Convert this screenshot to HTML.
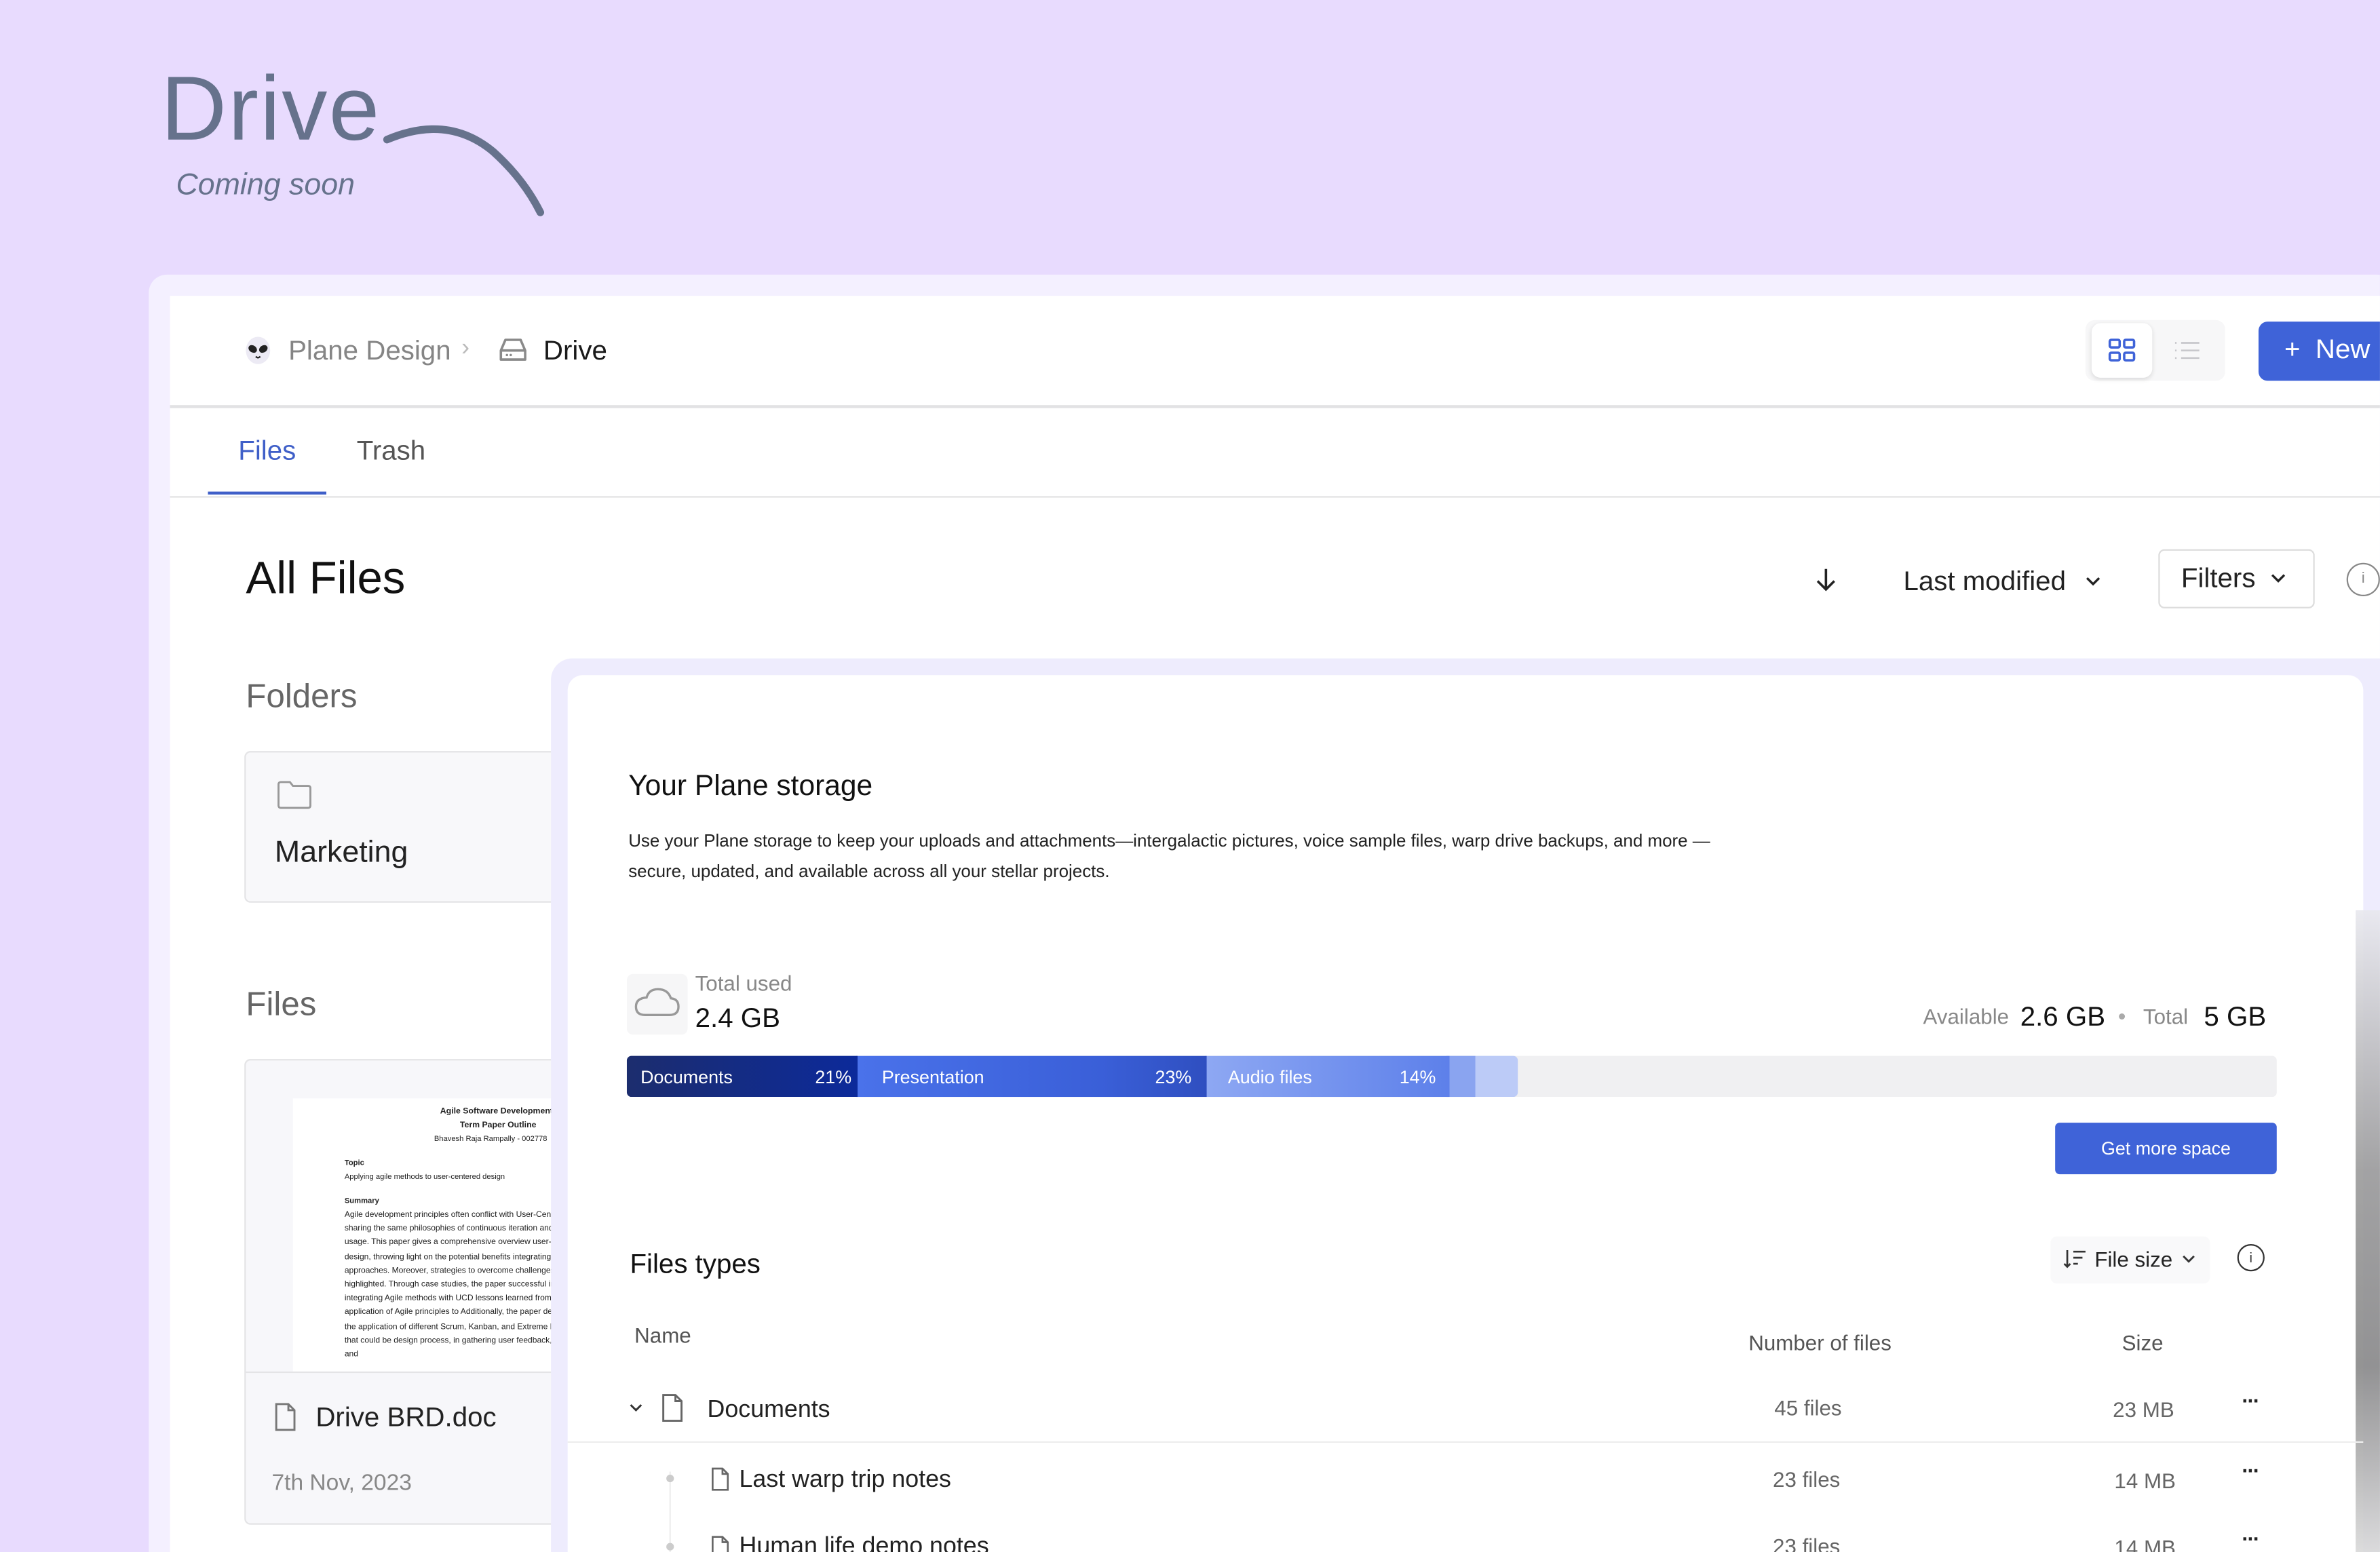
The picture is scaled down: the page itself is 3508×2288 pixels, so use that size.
<!DOCTYPE html>
<html><head><meta charset="utf-8">
<style>
html,body{margin:0;padding:0;width:3508px;height:2288px;overflow:hidden;background:#e8dbfe;}
#s{position:absolute;left:0;top:0;width:1568px;height:1023px;overflow:hidden;transform:scale(2.2372,2.2366);transform-origin:0 0;font-family:"Liberation Sans",sans-serif;color:#1a1a1a;}
.a{position:absolute;white-space:nowrap;}
.doc{font-size:5px;line-height:9.2px;color:#222}
</style></head><body><div id="s">

<svg class="a" style="left:100px;top:30px" width="270" height="120" viewBox="0 0 270 120">
<text x="6" y="62" font-family="Liberation Sans" font-size="60" fill="#66728c" letter-spacing="1">Drive</text>
<text x="16" y="98" font-family="Liberation Sans" font-size="20" font-style="italic" fill="#66728c">Coming soon</text>
<path d="M155 62 Q195 45 225 70 Q245 88 256 110" fill="none" stroke="#66728c" stroke-width="5" stroke-linecap="round"/>
</svg>

<div class="a" style="left:98px;top:181px;width:1480px;height:860px;background:#f4f0ff;border-radius:12px"></div>
<div class="a" style="left:112px;top:195px;width:1470px;height:850px;background:#fff"></div>

<svg class="a" style="left:160px;top:221px" width="20" height="20" viewBox="0 0 20 20"><ellipse cx="10" cy="10" rx="8" ry="9" fill="#eceaf4"/><ellipse cx="6.5" cy="9" rx="3" ry="2.3" transform="rotate(35 6.5 9)" fill="#222"/><ellipse cx="13.5" cy="9" rx="3" ry="2.3" transform="rotate(-35 13.5 9)" fill="#222"/><path d="M8.5 14 Q10 15.5 11.5 14" stroke="#222" fill="none"/></svg>
<div class="a" style="left:190px;top:221px;font-size:18px;color:#858585">Plane Design</div>
<div class="a" style="left:304px;top:221px;font-size:16px;color:#bbb">›</div>
<svg class="a" style="left:328px;top:222px" width="20" height="18" viewBox="0 0 20 18"><path d="M2 9 L5 2 H15 L18 9 V15 H2 Z M2 9 H18" fill="none" stroke="#8a8a8a" stroke-width="1.6" stroke-linejoin="round"/><circle cx="6" cy="12" r=".8" fill="#8a8a8a"/><circle cx="8.5" cy="12" r=".8" fill="#8a8a8a"/></svg>
<div class="a" style="left:358px;top:221px;font-size:18px;color:#1a1a1a">Drive</div>

<div class="a" style="left:1374px;top:211px;width:92px;height:40px;background:#f7f7f8;border-radius:6px"></div>
<div class="a" style="left:1378px;top:213px;width:40px;height:36px;background:#fff;border-radius:6px;box-shadow:0 1px 3px rgba(0,0,0,.12)"></div>
<svg class="a" style="left:1389px;top:223px" width="18" height="16" viewBox="0 0 18 16"><g fill="none" stroke="#3f63d8" stroke-width="1.6"><rect x="1" y="1" width="6.5" height="5" rx="1"/><rect x="10.5" y="1" width="6.5" height="5" rx="1"/><rect x="1" y="9.5" width="6.5" height="5" rx="1"/><rect x="10.5" y="9.5" width="6.5" height="5" rx="1"/></g></svg>
<svg class="a" style="left:1432px;top:224px" width="18" height="14" viewBox="0 0 18 14"><g stroke="#c8c8cc" stroke-width="1.2"><path d="M1 2h1M5 2h12M1 7h1M5 7h12M1 12h1M5 12h12"/></g></svg>
<div class="a" style="left:1488px;top:212px;width:100px;height:39px;background:#3f63d8;border-radius:6px"></div>
<div class="a" style="left:1505px;top:220px;font-size:18px;color:#fff">+&nbsp;&nbsp;New</div>

<div class="a" style="left:112px;top:267px;width:1460px;height:1.5px;background:#e2e2e4"></div>
<div class="a" style="left:157px;top:287px;font-size:18px;color:#3f5fc8">Files</div>
<div class="a" style="left:235px;top:287px;font-size:18px;color:#555">Trash</div>
<div class="a" style="left:137px;top:324px;width:78px;height:2px;background:#3f5fc8"></div>
<div class="a" style="left:112px;top:326.5px;width:1460px;height:1.5px;background:#e2e2e4"></div>

<div class="a" style="left:162px;top:365px;font-size:30px;color:#111">All Files</div>
<svg class="a" style="left:1194px;top:373px" width="18" height="18" viewBox="0 0 18 18"><path d="M9 2 V15 M3.5 10 L9 15.5 L14.5 10" fill="none" stroke="#222" stroke-width="1.6"/></svg>
<div class="a" style="left:1254px;top:373px;font-size:18px;color:#222">Last modified</div>
<svg class="a" style="left:1373px;top:378px" width="12" height="10" viewBox="0 0 12 10"><path d="M2 3 L6 7 L10 3" fill="none" stroke="#222" stroke-width="1.5"/></svg>
<div class="a" style="left:1422px;top:362px;width:101px;height:37px;border:1.5px solid #ddd;border-radius:4px"></div>
<div class="a" style="left:1437px;top:371px;font-size:18px;color:#222">Filters</div>
<svg class="a" style="left:1495px;top:376px" width="12" height="10" viewBox="0 0 12 10"><path d="M2 3 L6 7 L10 3" fill="none" stroke="#222" stroke-width="1.5"/></svg>
<div class="a" style="left:1546px;top:371px;width:20px;height:20px;border:1.2px solid #888;border-radius:50%;font-size:10px;color:#888;text-align:center;line-height:20px">i</div>

<div class="a" style="left:162px;top:446px;font-size:22px;color:#666">Folders</div>
<div class="a" style="left:161px;top:495px;width:220px;height:98px;border:1px solid #e4e4e6;border-radius:4px;background:#f8f8fa"></div>
<svg class="a" style="left:182px;top:514px" width="24" height="20" viewBox="0 0 24 20"><path d="M1.5 3 Q1.5 1.5 3 1.5 H9 L11 4 H21 Q22.5 4 22.5 5.5 V17 Q22.5 18.5 21 18.5 H3 Q1.5 18.5 1.5 17 Z" fill="none" stroke="#999" stroke-width="1.3"/></svg>
<div class="a" style="left:181px;top:551px;font-size:20px;color:#222">Marketing</div>

<div class="a" style="left:162px;top:649px;font-size:22px;color:#666">Files</div>
<div class="a" style="left:161px;top:698px;width:220px;height:305px;border:1px solid #e4e4e6;border-radius:4px;background:#f7f7fa"></div>
<div class="a" style="left:193px;top:724px;width:180px;height:180px;background:#fff;overflow:hidden">
 <div class="doc a" style="left:97px;top:5px;font-weight:bold;font-size:5.5px">Agile Software Development</div>
 <div class="doc a" style="left:110px;top:14px;font-weight:bold;font-size:5.5px">Term Paper Outline</div>
 <div class="doc a" style="left:93px;top:23px">Bhavesh Raja Rampally - 002778</div>
 <div class="doc a" style="left:34px;top:39px;font-weight:bold">Topic</div>
 <div class="doc a" style="left:34px;top:48px">Applying agile methods to user-centered design</div>
 <div class="doc a" style="left:34px;top:64px;font-weight:bold">Summary</div>
 <div class="doc a" style="left:34px;top:73px;white-space:normal;width:170px;font-size:5.4px">Agile development principles often conflict with User-Centered both sharing the same philosophies of continuous iteration and real-world usage. This paper gives a comprehensive overview user-centered design, throwing light on the potential benefits integrating the two approaches. Moreover, strategies to overcome challenges are highlighted. Through case studies, the paper successful instances of integrating Agile methods with UCD lessons learned from the application of Agile principles to Additionally, the paper demonstrates the application of different Scrum, Kanban, and Extreme Programming that could be design process, in gathering user feedback, wireframing, and</div>
</div>
<div class="a" style="left:162px;top:904px;width:219px;height:1px;background:#e4e4e6"></div>
<svg class="a" style="left:180px;top:924px" width="16" height="20" viewBox="0 0 16 20"><path d="M2 1.5 H10 L14 5.5 V18.5 H2 Z M10 1.5 V5.5 H14" fill="none" stroke="#777" stroke-width="1.3"/></svg>
<div class="a" style="left:208px;top:924px;font-size:18px;color:#222">Drive BRD.doc</div>
<div class="a" style="left:179px;top:969px;font-size:15px;color:#888">7th Nov, 2023</div>

<div class="a" style="left:363px;top:434px;width:1220px;height:620px;background:#eeecfd;border-radius:14px"></div>
<div class="a" style="left:374px;top:445px;width:1183px;height:600px;background:#fff;border-radius:10px"></div>
<div class="a" style="left:1552px;top:600px;width:18px;height:430px;background:linear-gradient(180deg,#e8e8ee,#9a9a9a 40%,#888 70%,#ddd);opacity:.9"></div>

<div class="a" style="left:414px;top:508px;font-size:19px;color:#111">Your Plane storage</div>
<div class="a" style="left:414px;top:545px;font-size:11.6px;line-height:20px;color:#222">Use your Plane storage to keep your uploads and attachments—intergalactic pictures, voice sample files, warp drive backups, and more —<br>secure, updated, and available across all your stellar projects.</div>

<div class="a" style="left:413px;top:642px;width:40px;height:40px;background:#f6f6f7;border-radius:4px"></div>
<svg class="a" style="left:417px;top:649px" width="32" height="24" viewBox="0 0 32 24"><path d="M8 20 H24 Q30 20 30 14.5 Q30 9.5 25 9 Q23 3 16.5 3 Q10.5 3 9 8.5 Q2 9 2 14.5 Q2 20 8 20 Z" fill="none" stroke="#999" stroke-width="1.5"/></svg>
<div class="a" style="left:458px;top:640px;font-size:14px;color:#888">Total used</div>
<div class="a" style="left:458px;top:661px;font-size:18px;color:#111">2.4 GB</div>
<div class="a" style="left:1267px;top:662px;font-size:14px;color:#888">Available</div>
<div class="a" style="left:1331px;top:660px;font-size:18px;color:#111">2.6 GB</div>
<div class="a" style="left:1396px;top:668px;width:4px;height:4px;border-radius:50%;background:#aaa"></div>
<div class="a" style="left:1412px;top:662px;font-size:14px;color:#888">Total</div>
<div class="a" style="left:1452px;top:660px;font-size:18px;color:#111">5 GB</div>

<div class="a" style="left:413px;top:696px;width:1087px;height:27px;background:#f0f0f2;border-radius:3px"></div>
<div class="a" style="left:953px;top:696px;width:47px;height:27px;background:#bccbf7;border-radius:0 3px 3px 0"></div>
<div class="a" style="left:953px;top:696px;width:19px;height:27px;background:#8aa4f0"></div>
<div class="a" style="left:794px;top:696px;width:161px;height:27px;background:linear-gradient(90deg,#8ea8f3,#5d80ea);"></div>
<div class="a" style="left:564px;top:696px;width:231px;height:27px;background:linear-gradient(90deg,#4a72ea,#3a5fd8 70%,#2f4fc0);"></div>
<div class="a" style="left:413px;top:696px;width:152px;height:27px;background:linear-gradient(90deg,#1c2d6e,#0c2a9a);border-radius:3px 0 0 3px"></div>
<div class="a" style="left:422px;top:703px;font-size:12px;color:#fff">Documents</div>
<div class="a" style="left:537px;top:703px;font-size:12px;color:#fff">21%</div>
<div class="a" style="left:581px;top:703px;font-size:12px;color:#fff">Presentation</div>
<div class="a" style="left:761px;top:703px;font-size:12px;color:#fff">23%</div>
<div class="a" style="left:809px;top:703px;font-size:12px;color:#fff">Audio files</div>
<div class="a" style="left:922px;top:703px;font-size:12px;color:#fff">14%</div>

<div class="a" style="left:1354px;top:740px;width:146px;height:34px;background:#3f63d8;border-radius:3px;color:#fff;font-size:12px;text-align:center;line-height:34px">Get more space</div>

<div class="a" style="left:415px;top:823px;font-size:18px;color:#111">Files types</div>
<div class="a" style="left:1351px;top:815px;width:105px;height:31px;background:#f9f9fa;border-radius:4px"></div>
<svg class="a" style="left:1359px;top:823px" width="16" height="14" viewBox="0 0 16 14"><path d="M3 1 V12 M1 10 L3 12 L5 10 M7 2 H15 M7 6 H13 M7 10 H10" fill="none" stroke="#333" stroke-width="1.2"/></svg>
<div class="a" style="left:1380px;top:822px;font-size:14px;color:#222">File size</div>
<svg class="a" style="left:1437px;top:826px" width="10" height="8" viewBox="0 0 10 8"><path d="M1.5 2 L5 5.5 L8.5 2" fill="none" stroke="#333" stroke-width="1.3"/></svg>
<div class="a" style="left:1474px;top:820px;width:16px;height:16px;border:1.2px solid #333;border-radius:50%;font-size:9px;text-align:center;line-height:16px;color:#333">i</div>

<div class="a" style="left:418px;top:872px;font-size:14px;color:#555">Name</div>
<div class="a" style="left:1152px;top:877px;font-size:14px;color:#555">Number of files</div>
<div class="a" style="left:1398px;top:877px;font-size:14px;color:#555">Size</div>

<svg class="a" style="left:414px;top:924px" width="10" height="8" viewBox="0 0 10 8"><path d="M1.5 2 L5 5.5 L8.5 2" fill="none" stroke="#333" stroke-width="1.3"/></svg>
<svg class="a" style="left:435px;top:918px" width="16" height="20" viewBox="0 0 16 20"><path d="M2 1.5 H10 L14 5.5 V18.5 H2 Z M10 1.5 V5.5 H14" fill="none" stroke="#666" stroke-width="1.3"/></svg>
<div class="a" style="left:466px;top:921px;font-size:16px;color:#222">Documents</div>
<div class="a" style="left:1169px;top:920px;font-size:14px;color:#666">45 files</div>
<div class="a" style="left:1392px;top:921px;font-size:14px;color:#666">23 MB</div>
<div class="a" style="left:1477px;top:915px;font-size:14px;color:#222;letter-spacing:-1px;font-weight:bold">···</div>
<div class="a" style="left:374px;top:950px;width:1183px;height:1px;background:#eee"></div>

<div class="a" style="left:441px;top:970px;width:1px;height:60px;background:#eee"></div>
<div class="a" style="left:439px;top:972px;width:5px;height:5px;border-radius:50%;background:#ccc"></div>
<svg class="a" style="left:468px;top:967px" width="13" height="16" viewBox="0 0 13 16"><path d="M1.5 1 H8 L11.5 4.5 V15 H1.5 Z M8 1 V4.5 H11.5" fill="none" stroke="#666" stroke-width="1.2"/></svg>
<div class="a" style="left:487px;top:967px;font-size:16px;color:#222">Last warp trip notes</div>
<div class="a" style="left:1168px;top:967px;font-size:14px;color:#666">23 files</div>
<div class="a" style="left:1393px;top:968px;font-size:14px;color:#666">14 MB</div>
<div class="a" style="left:1477px;top:961px;font-size:14px;color:#222;letter-spacing:-1px;font-weight:bold">···</div>

<div class="a" style="left:439px;top:1017px;width:5px;height:5px;border-radius:50%;background:#ccc"></div>
<svg class="a" style="left:468px;top:1012px" width="13" height="16" viewBox="0 0 13 16"><path d="M1.5 1 H8 L11.5 4.5 V15 H1.5 Z M8 1 V4.5 H11.5" fill="none" stroke="#666" stroke-width="1.2"/></svg>
<div class="a" style="left:487px;top:1011px;font-size:16px;color:#222">Human life demo notes</div>
<div class="a" style="left:1168px;top:1011px;font-size:14px;color:#666">23 files</div>
<div class="a" style="left:1393px;top:1012px;font-size:14px;color:#666">14 MB</div>
<div class="a" style="left:1477px;top:1006px;font-size:14px;color:#222;letter-spacing:-1px;font-weight:bold">···</div>
</div></body></html>
